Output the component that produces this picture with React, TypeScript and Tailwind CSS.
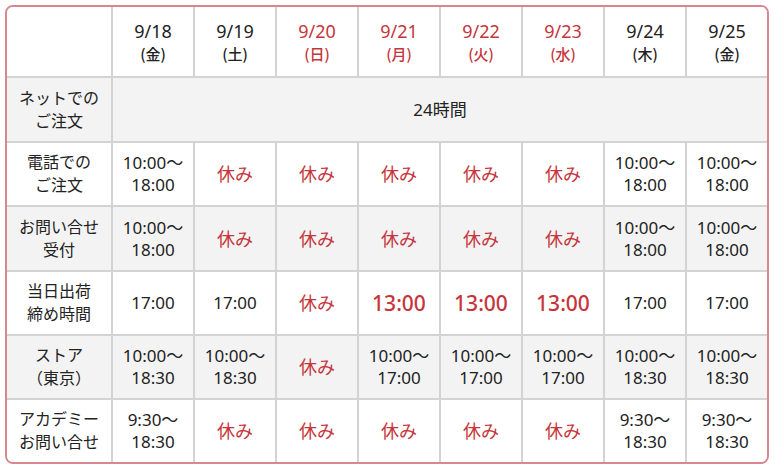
const RED = "text-[#c6353b]";

type Cell = { text: string[]; red?: boolean; big?: boolean };

const days = [
  { d: "9/18", w: "(金)" },
  { d: "9/19", w: "(土)" },
  { d: "9/20", w: "(日)", red: true },
  { d: "9/21", w: "(月)", red: true },
  { d: "9/22", w: "(火)", red: true },
  { d: "9/23", w: "(水)", red: true },
  { d: "9/24", w: "(木)" },
  { d: "9/25", w: "(金)" },
];

const off: Cell = { text: ["休み"], red: true };
const t = (a: string, b: string): Cell => ({ text: [a + "〜", b] });

const rows: { label: string[]; cells: Cell[]; gray: boolean; h: string }[] = [
  {
    label: ["電話での", "ご注文"],
    gray: false,
    h: "h-[62px]",
    cells: [t("10:00", "18:00"), off, off, off, off, off, t("10:00", "18:00"), t("10:00", "18:00")],
  },
  {
    label: ["お問い合せ", "受付"],
    gray: true,
    h: "h-[63px]",
    cells: [t("10:00", "18:00"), off, off, off, off, off, t("10:00", "18:00"), t("10:00", "18:00")],
  },
  {
    label: ["当日出荷", "締め時間"],
    gray: false,
    h: "h-[62px]",
    cells: [
      { text: ["17:00"] },
      { text: ["17:00"] },
      off,
      { text: ["13:00"], red: true, big: true },
      { text: ["13:00"], red: true, big: true },
      { text: ["13:00"], red: true, big: true },
      { text: ["17:00"] },
      { text: ["17:00"] },
    ],
  },
  {
    label: ["ストア", "（東京）"],
    gray: true,
    h: "h-[62px]",
    cells: [t("10:00", "18:30"), t("10:00", "18:30"), off, t("10:00", "17:00"), t("10:00", "17:00"), t("10:00", "17:00"), t("10:00", "18:30"), t("10:00", "18:30")],
  },
  {
    label: ["アカデミー", "お問い合せ"],
    gray: false,
    h: "h-[62px]",
    cells: [t("9:30", "18:30"), off, off, off, off, off, t("9:30", "18:30"), t("9:30", "18:30")],
  },
];

function Box({ gray, children, className = "" }: { gray?: boolean; children?: React.ReactNode; className?: string }) {
  return (
    <div className={`flex flex-col items-center justify-center text-center ${gray ? "bg-[#f3f3f3]" : "bg-white"} ${className}`}>
      {children}
    </div>
  );
}

export default function App() {
  return (
    <div
      className="min-h-[470px] w-[775px] bg-white pl-[5px] pt-[5px] text-[#222]"
      style={{ fontFamily: '"Noto Sans", "Noto Sans CJK JP", sans-serif' }}
    >
      <div className="w-[764px] overflow-hidden rounded-[8px] border-2 border-[#d9878f]">
        <div className="grid grid-cols-[104px_repeat(8,80px)] gap-[2px] bg-[#d3d3d3]">
          <Box className="h-[69px]" />
          {days.map((d) => (
            <Box key={d.d} className={`h-[69px] ${d.red ? RED : ""}`}>
              <span className="text-[18px] leading-[24px]">{d.d}</span>
              <span className="font-['Noto_Sans_CJK_JP',sans-serif] text-[15px] font-medium leading-[22px]">{d.w}</span>
            </Box>
          ))}

          <Box gray className="h-[63px] text-[16px] leading-[23px]">
            <span>ネットでの</span>
            <span>ご注文</span>
          </Box>
          <Box gray className="col-span-8 h-[63px] text-[17px]">
            24時間
          </Box>

          {rows.map((r) => (
            <>
              <Box key={r.label[0]} gray={r.gray} className={`${r.h} text-[16px] leading-[23px]`}>
                {r.label.map((l) => (
                  <span key={l}>{l}</span>
                ))}
              </Box>
              {r.cells.map((c, i) => (
                <Box
                  key={r.label[0] + i}
                  gray={r.gray}
                  className={`${r.h} ${c.red ? RED : ""} ${c.big ? "text-[21px] font-medium" : c.red ? "text-[18px]" : "text-[17px]"} leading-[22px]`}
                >
                  {c.text.map((l) => (
                    <span key={l}>{l}</span>
                  ))}
                </Box>
              ))}
            </>
          ))}
        </div>
      </div>
    </div>
  );
}
